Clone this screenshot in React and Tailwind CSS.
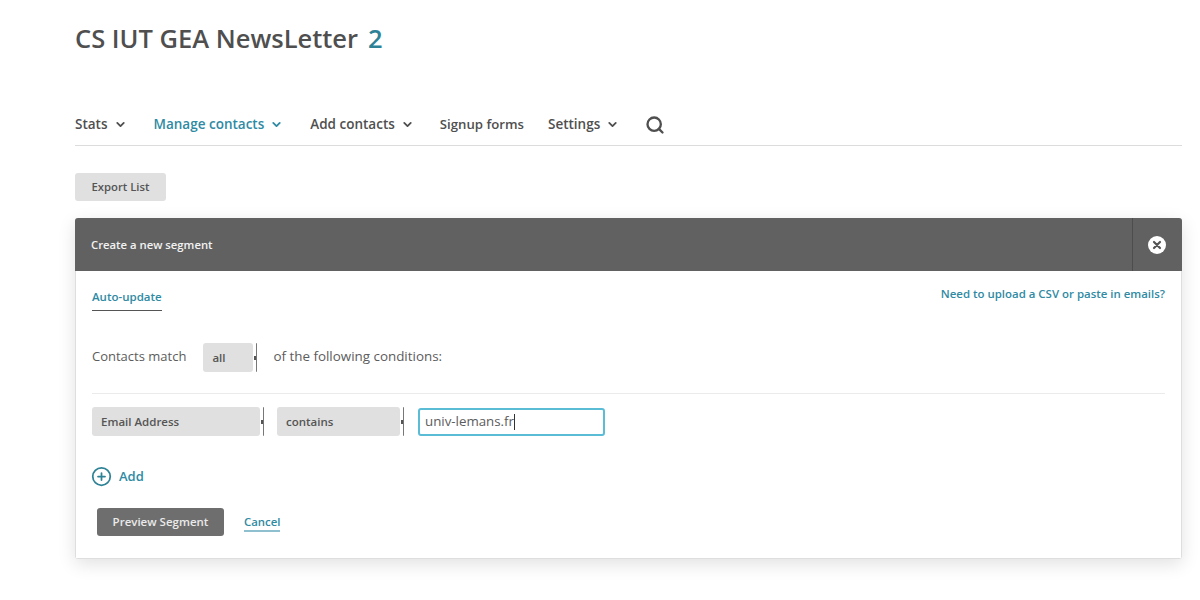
import React from 'react';
import { ChevronDown, Search, CirclePlus } from 'lucide-react';

const font = { fontFamily: '"Open Sans", sans-serif' };

const NavItem = ({ label, active, caret = true, className = 'text-[13.5px]' }) => (
  <div className={`flex items-center gap-[6px] whitespace-nowrap font-semibold ${className} ${caret ? 'pr-[3px]' : ''} ${active ? 'text-[#2f8aa3]' : 'text-[#4f4f4f]'}`}>
    <span>{label}</span>
    {caret && <ChevronDown size={13} strokeWidth={3.4} />}
  </div>
);

// native select look: grey fill, then the dark edge with a small notch
const Select = ({ label, width }) => (
  <div className={`flex h-[29px] items-stretch ${width}`}>
    <div className="flex flex-1 items-center rounded-[3px] bg-[#e0e0e0] pl-[9px] text-[11.5px] font-semibold text-[#555]">
      {label}
    </div>
    <div className="flex w-[3px] items-center">
      <span className="ml-[1px] h-[4px] w-[2px] bg-[#555]" />
    </div>
    <div className="w-[1.5px] rounded-r-[2px] bg-[#777]" />
  </div>
);

export default function App() {
  return (
    <div className="h-[600px] w-[1200px] overflow-hidden bg-white pl-[75px] pr-[18px]" style={font}>
      <div className="flex h-[80px] items-center gap-[10px] pb-[4px] text-[25.5px] font-semibold text-[#4f4f4f]">
        <span>CS IUT GEA NewsLetter</span>
        <span className="text-[#2e8296]">2</span>
      </div>

      <div className="mt-[28px] flex h-[38px] items-center gap-[24px] border-b border-[#dcdcdc] pb-[4px]">
        <NavItem label="Stats" />
        <NavItem label="Manage contacts" active />
        <NavItem label="Add contacts" />
        <NavItem label="Signup forms" caret={false} className="-ml-[1px] pt-[1px] text-[13.2px]" />
        <NavItem label="Settings" />
        <Search size={20} strokeWidth={2.8} className="-ml-[1px] text-[#4f4f4f]" />
      </div>

      <button className="mt-[27px] block h-[28px] w-[91px] rounded-[3px] bg-[#e0e0e0] text-[11.3px] font-semibold text-[#555]">
        Export List
      </button>

      <div className="mt-[17px] rounded-[3px] border-x border-b border-[#dedede] shadow-[0_5px_18px_rgba(0,0,0,0.12)]">
        <div className="-mx-px flex h-[53px] items-center justify-between rounded-t-[3px] bg-[#616161] pl-[16px] text-[11.3px] font-semibold text-[#f2f2f2]">
          <span className="pt-[1px]">Create a new segment</span>
          <div className="flex h-full w-[50px] items-center justify-center border-l border-[#4d4d4d] pr-[1px]">
            <svg width="18" height="18" viewBox="0 0 18 18">
              <circle cx="9" cy="9" r="9" fill="#fff" />
              <path d="M6 6l6 6M12 6l-6 6" stroke="#555" strokeWidth="2.2" strokeLinecap="round" />
            </svg>
          </div>
        </div>

        <div className="h-[287px] bg-white px-[16px]">
          <div className="flex items-start justify-between pt-[14px]">
            <div className="mt-[2px] flex h-[24px] w-[70px] items-start whitespace-nowrap border-b border-[#555] pt-[1px] text-[11.5px] font-semibold text-[#2f8aa3]">
              Auto-update
            </div>
            <span className="text-[11.45px] font-semibold text-[#2f8aa3]">Need to upload a CSV or paste in emails?</span>
          </div>

          <div className="mt-[32px] flex items-center text-[#5c5c5c]">
            <span className="mb-[2px] text-[13px]">Contacts match</span>
            <div className="ml-[17px] mr-[16px]"><Select label="all" width="w-[54px]" /></div>
            <span className="mb-[2px] text-[13.4px]">of the following conditions:</span>
          </div>

          <div className="mt-[21px] flex items-center gap-[13px] border-t border-[#ebebeb] pt-[13px]">
            <Select label="Email Address" width="w-[172px]" />
            <Select label="contains" width="w-[127px]" />
            <div className="ml-[1px] flex h-[28px] w-[187px] items-center rounded-[3px] border-2 border-[#5bbcd6] pl-[5px] text-[13.3px] text-[#5c5c5c]">
              univ-lemans.fr<span className="h-[16px] w-px bg-[#333]" />
            </div>
          </div>

          <div className="mt-[30px] flex items-center gap-[7px] text-[13px] font-semibold text-[#2f8aa3]">
            <CirclePlus size={21} strokeWidth={2} className="-ml-[1px] text-[#2e8296]" />
            <span>Add</span>
          </div>

          <div className="mt-[21px] flex items-center gap-[20px] pl-[5px]">
            <button className="h-[28px] w-[127px] rounded-[3px] bg-[#6e6e6e] text-[11.5px] font-semibold text-[#eaeaea]">
              Preview Segment
            </button>
            <span className="mt-[1px] border-b-2 border-[#8fc0cf] text-[11.4px] font-semibold leading-[16px] text-[#2f8aa3]">Cancel</span>
          </div>
        </div>
      </div>
    </div>
  );
}
